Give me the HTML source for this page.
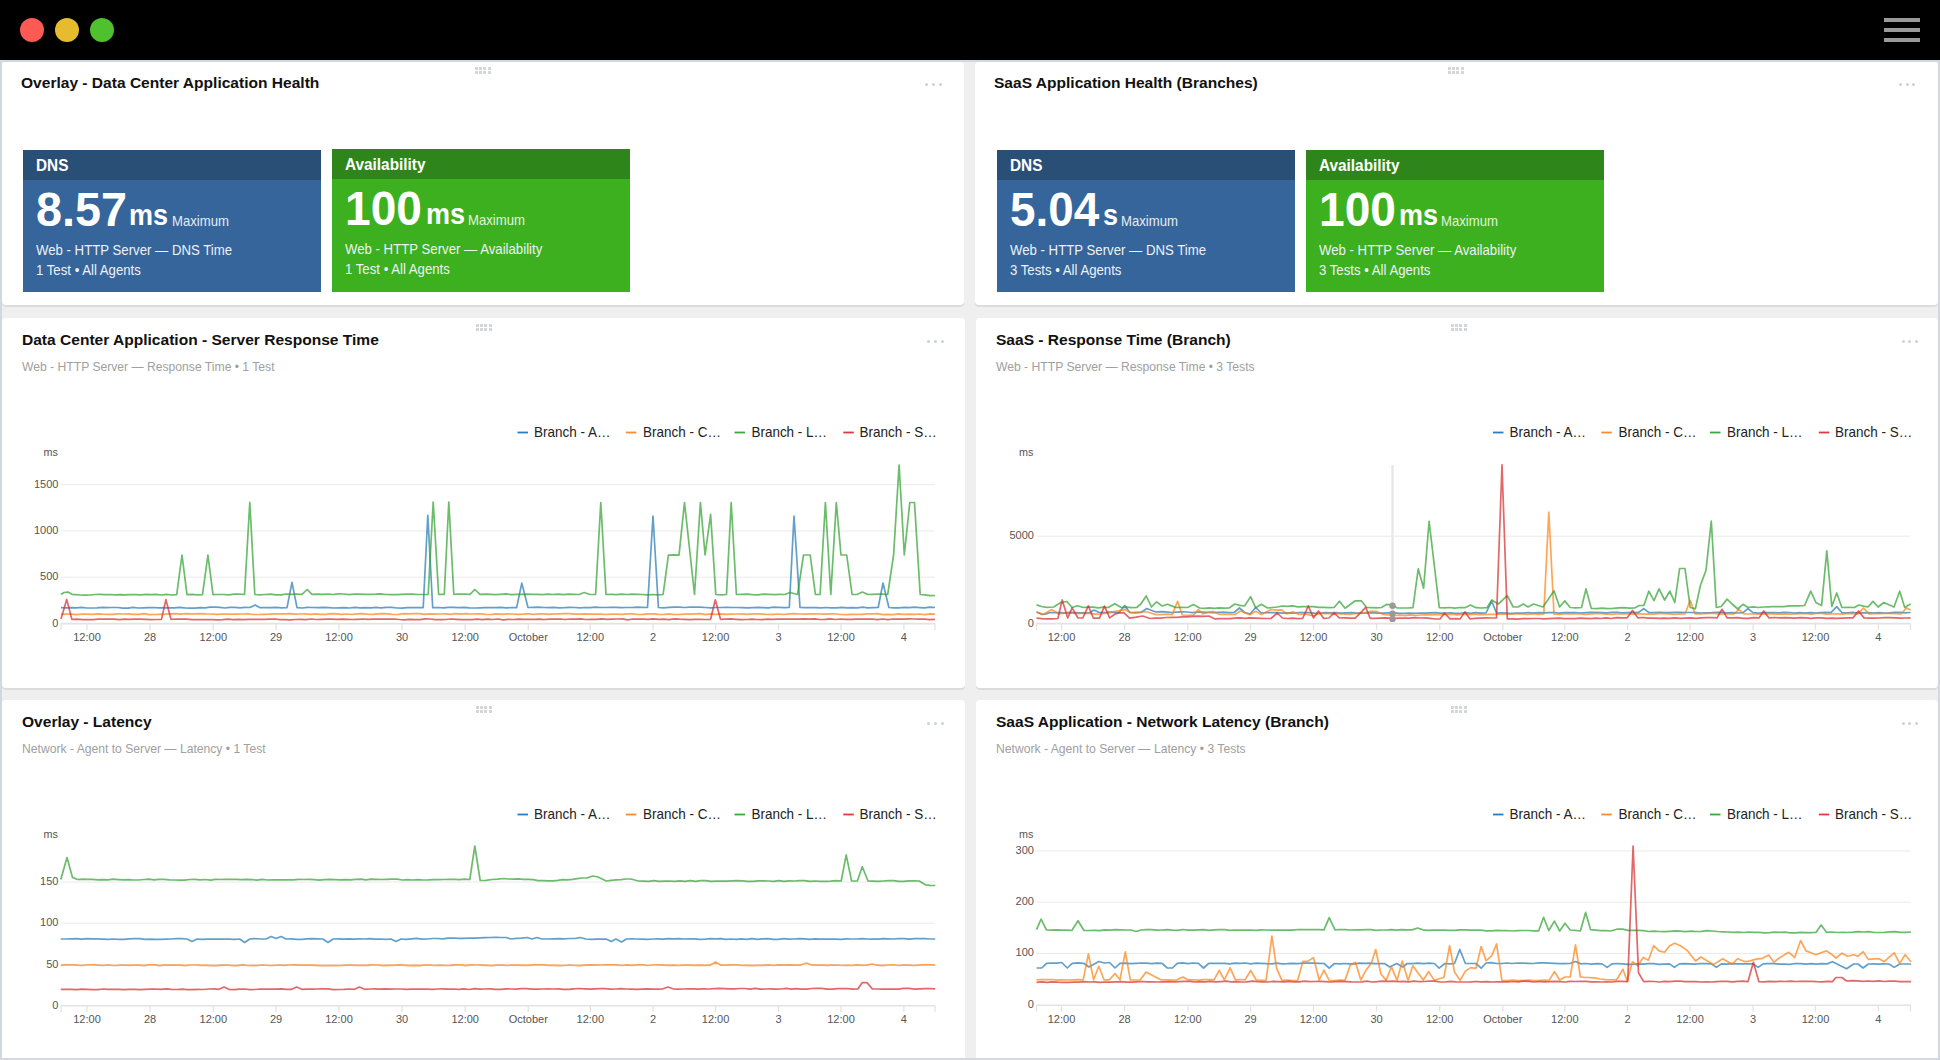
<!DOCTYPE html>
<html><head><meta charset="utf-8">
<style>
*{margin:0;padding:0;box-sizing:border-box}
html,body{width:1940px;height:1060px;overflow:hidden;background:#efefef;font-family:"Liberation Sans",sans-serif;position:relative}
.top{position:absolute;left:0;top:0;width:1940px;height:60px;background:#000}
.dot{position:absolute;top:18px;width:24px;height:24px;border-radius:50%}
.ham{position:absolute;left:1884px;width:36px;height:3.5px;background:#9a9a9a}
.edge{position:absolute;background:#d3d7df}
.card{position:absolute;background:#fff;border-radius:4px;box-shadow:0 2px 0 #dcdcdc}
.t{position:absolute;white-space:nowrap;line-height:1}
.title{font-weight:bold;font-size:15.55px;color:#111}
.sub{font-size:12.15px;color:#a0a0a0}
.tile{position:absolute;width:298px;height:142px;color:#fff}
.tile .hd{position:absolute;left:0;top:0;width:100%;height:30px}
.tile .hdt{position:absolute;left:13px;top:7.4px;font-weight:bold;font-size:16.5px;transform:scaleX(0.93);transform-origin:0 0}
.tile .big{position:absolute;top:0;font-weight:bold;font-size:48px}
.tile .unit{position:absolute;top:0;font-weight:bold;font-size:30px;transform:scaleX(0.9);transform-origin:0 0}
.tile .mx{position:absolute;top:0;font-size:14.3px;transform:scaleX(0.92);transform-origin:0 0;color:#e6ecf3}
.green .mx{color:#e2f3dc}
.tile .l1{position:absolute;left:13px;font-size:14.5px;transform:scaleX(0.91);transform-origin:0 0;color:#eef2f6}
.tile .l2{position:absolute;left:13px;font-size:14.5px;transform:scaleX(0.91);transform-origin:0 0;color:#eef2f6}
.blue{background:#35659b}.blue .hd{background:#2a4f77}
.green{background:#3cb01e}.green .hd{background:#2e861b}
.grip{position:absolute;width:17px;height:8px;background-image:radial-gradient(#cfd3d5 0 0);}
.gd{position:absolute;width:3px;height:3px;background:#d3d7d9}
.md{position:absolute;width:3px;height:3px;border-radius:50%;background:#cdd1d4}
.ov{position:absolute;left:0;top:0}
.ax{font-family:"Liberation Sans",sans-serif;font-size:11px;fill:#555}
.ms{font-family:"Liberation Sans",sans-serif;font-size:10.8px;fill:#555}
.lg{font-family:"Liberation Sans",sans-serif;font-size:15px;fill:#222}
</style></head><body>
<div class="top">
  <div class="dot" style="left:20px;background:#fc5a52"></div>
  <div class="dot" style="left:55px;background:#e6bb2e"></div>
  <div class="dot" style="left:90px;background:#50c12e"></div>
  <div class="ham" style="top:18px"></div>
  <div class="ham" style="top:28px"></div>
  <div class="ham" style="top:38px"></div>
</div>
<div class="edge" style="left:0;top:60px;width:1940px;height:2px"></div>
<div class="edge" style="left:0;top:60px;width:2px;height:1000px"></div>
<div class="edge" style="left:1938px;top:60px;width:2px;height:1000px"></div>
<div class="edge" style="left:0;top:1058px;width:1940px;height:2px"></div>

<div class="card" style="left:2px;top:62px;width:962px;height:243px"></div>
<div class="card" style="left:975px;top:62px;width:963px;height:243px"></div>
<div class="card" style="left:2px;top:318px;width:963px;height:370px"></div>
<div class="card" style="left:976px;top:318px;width:962px;height:370px"></div>
<div class="card" style="left:2px;top:700px;width:963px;height:358px;border-radius:4px 4px 0 0;box-shadow:none"></div>
<div class="card" style="left:976px;top:700px;width:962px;height:358px;border-radius:4px 4px 0 0;box-shadow:none"></div>


<div class="gd" style="left:475px;top:67px"></div>
<div class="gd" style="left:479px;top:67px"></div>
<div class="gd" style="left:483px;top:67px"></div>
<div class="gd" style="left:488px;top:67px"></div>
<div class="gd" style="left:475px;top:71px"></div>
<div class="gd" style="left:479px;top:71px"></div>
<div class="gd" style="left:483px;top:71px"></div>
<div class="gd" style="left:488px;top:71px"></div>
<div class="gd" style="left:1448px;top:67px"></div>
<div class="gd" style="left:1452px;top:67px"></div>
<div class="gd" style="left:1456px;top:67px"></div>
<div class="gd" style="left:1461px;top:67px"></div>
<div class="gd" style="left:1448px;top:71px"></div>
<div class="gd" style="left:1452px;top:71px"></div>
<div class="gd" style="left:1456px;top:71px"></div>
<div class="gd" style="left:1461px;top:71px"></div>
<div class="gd" style="left:476px;top:324px"></div>
<div class="gd" style="left:480px;top:324px"></div>
<div class="gd" style="left:484px;top:324px"></div>
<div class="gd" style="left:489px;top:324px"></div>
<div class="gd" style="left:476px;top:328px"></div>
<div class="gd" style="left:480px;top:328px"></div>
<div class="gd" style="left:484px;top:328px"></div>
<div class="gd" style="left:489px;top:328px"></div>
<div class="gd" style="left:1451px;top:324px"></div>
<div class="gd" style="left:1455px;top:324px"></div>
<div class="gd" style="left:1459px;top:324px"></div>
<div class="gd" style="left:1464px;top:324px"></div>
<div class="gd" style="left:1451px;top:328px"></div>
<div class="gd" style="left:1455px;top:328px"></div>
<div class="gd" style="left:1459px;top:328px"></div>
<div class="gd" style="left:1464px;top:328px"></div>
<div class="gd" style="left:476px;top:706px"></div>
<div class="gd" style="left:480px;top:706px"></div>
<div class="gd" style="left:484px;top:706px"></div>
<div class="gd" style="left:489px;top:706px"></div>
<div class="gd" style="left:476px;top:710px"></div>
<div class="gd" style="left:480px;top:710px"></div>
<div class="gd" style="left:484px;top:710px"></div>
<div class="gd" style="left:489px;top:710px"></div>
<div class="gd" style="left:1451px;top:706px"></div>
<div class="gd" style="left:1455px;top:706px"></div>
<div class="gd" style="left:1459px;top:706px"></div>
<div class="gd" style="left:1464px;top:706px"></div>
<div class="gd" style="left:1451px;top:710px"></div>
<div class="gd" style="left:1455px;top:710px"></div>
<div class="gd" style="left:1459px;top:710px"></div>
<div class="gd" style="left:1464px;top:710px"></div>
<div class="md" style="left:925.3px;top:83.3px"></div>
<div class="md" style="left:932.0px;top:83.3px"></div>
<div class="md" style="left:938.8px;top:83.3px"></div>
<div class="md" style="left:1898.9px;top:83.3px"></div>
<div class="md" style="left:1905.7px;top:83.3px"></div>
<div class="md" style="left:1912.4px;top:83.3px"></div>
<div class="md" style="left:927.1px;top:340.3px"></div>
<div class="md" style="left:933.9px;top:340.3px"></div>
<div class="md" style="left:940.6px;top:340.3px"></div>
<div class="md" style="left:1901.6px;top:340.3px"></div>
<div class="md" style="left:1908.3px;top:340.3px"></div>
<div class="md" style="left:1915.1px;top:340.3px"></div>
<div class="md" style="left:927.1px;top:722.3px"></div>
<div class="md" style="left:933.9px;top:722.3px"></div>
<div class="md" style="left:940.6px;top:722.3px"></div>
<div class="md" style="left:1901.6px;top:722.3px"></div>
<div class="md" style="left:1908.3px;top:722.3px"></div>
<div class="md" style="left:1915.1px;top:722.3px"></div>
<div class="t title" style="left:21px;top:75.2px">Overlay - Data Center Application Health</div>
<div class="t title" style="left:994px;top:75.2px">SaaS Application Health (Branches)</div>

<div class="tile blue" style="left:23px;top:150px">
  <div class="hd"></div><div class="t hdt">DNS</div>
  <div class="t big" style="left:13px;top:36px;transform:scaleX(0.975);transform-origin:0 0">8.57</div>
  <div class="t unit" style="left:106px;top:50px">ms</div>
  <div class="t mx" style="left:149px;top:64px">Maximum</div>
  <div class="t l1" style="top:92.5px">Web - HTTP Server — DNS Time</div>
  <div class="t l2" style="top:112.5px">1 Test • All Agents</div>
</div>
<div class="tile green" style="left:332px;top:149px;height:143px">
  <div class="hd"></div><div class="t hdt">Availability</div>
  <div class="t big" style="left:13px;top:36px;transform:scaleX(0.96);transform-origin:0 0">100</div>
  <div class="t unit" style="left:94px;top:50px">ms</div>
  <div class="t mx" style="left:136px;top:64px">Maximum</div>
  <div class="t l1" style="top:92.5px">Web - HTTP Server — Availability</div>
  <div class="t l2" style="top:112.5px">1 Test • All Agents</div>
</div>
<div class="tile blue" style="left:997px;top:150px">
  <div class="hd"></div><div class="t hdt">DNS</div>
  <div class="t big" style="left:13px;top:36px;transform:scaleX(0.955);transform-origin:0 0">5.04</div>
  <div class="t unit" style="left:105.5px;top:50px">s</div>
  <div class="t mx" style="left:124px;top:64px">Maximum</div>
  <div class="t l1" style="top:92.5px">Web - HTTP Server — DNS Time</div>
  <div class="t l2" style="top:112.5px">3 Tests • All Agents</div>
</div>
<div class="tile green" style="left:1306px;top:150px">
  <div class="hd"></div><div class="t hdt">Availability</div>
  <div class="t big" style="left:13px;top:36px;transform:scaleX(0.96);transform-origin:0 0">100</div>
  <div class="t unit" style="left:93px;top:50px">ms</div>
  <div class="t mx" style="left:135px;top:64px">Maximum</div>
  <div class="t l1" style="top:92.5px">Web - HTTP Server — Availability</div>
  <div class="t l2" style="top:112.5px">3 Tests • All Agents</div>
</div>

<div class="t title" style="left:22px;top:332.2px">Data Center Application - Server Response Time</div>
<div class="t sub" style="left:22px;top:361px">Web - HTTP Server — Response Time • 1 Test</div>
<div class="t title" style="left:996px;top:332.2px">SaaS - Response Time (Branch)</div>
<div class="t sub" style="left:996px;top:361px">Web - HTTP Server — Response Time • 3 Tests</div>

<div class="t title" style="left:22px;top:714.2px">Overlay - Latency</div>
<div class="t sub" style="left:22px;top:743px">Network - Agent to Server — Latency • 1 Test</div>
<div class="t title" style="left:996px;top:714.2px">SaaS Application - Network Latency (Branch)</div>
<div class="t sub" style="left:996px;top:743px">Network - Agent to Server — Latency • 3 Tests</div>

<svg class="ov" width="1940" height="1060" viewBox="0 0 1940 1060"><line x1="1392.5" x2="1392.5" y1="465" y2="621" stroke="#e8e8e8" stroke-width="2.4"/><line x1="61" x2="935" y1="484.7" y2="484.7" stroke="#e9e9e9" stroke-width="1"/>
<line x1="61" x2="935" y1="531" y2="531" stroke="#e9e9e9" stroke-width="1"/>
<line x1="61" x2="935" y1="577.2" y2="577.2" stroke="#e9e9e9" stroke-width="1"/>
<line x1="61" x2="935" y1="623.6" y2="623.6" stroke="#e3e3e3" stroke-width="1.6"/>
<line x1="61" x2="61" y1="623.6" y2="629.9" stroke="#e3e3e3" stroke-width="1.3"/>
<line x1="935" x2="935" y1="623.6" y2="629.9" stroke="#e3e3e3" stroke-width="1.3"/>
<line x1="87" x2="87" y1="623.6" y2="629.9" stroke="#e3e3e3" stroke-width="1.3"/>
<line x1="150.1" x2="150.1" y1="623.6" y2="629.9" stroke="#e3e3e3" stroke-width="1.3"/>
<line x1="213.3" x2="213.3" y1="623.6" y2="629.9" stroke="#e3e3e3" stroke-width="1.3"/>
<line x1="276.1" x2="276.1" y1="623.6" y2="629.9" stroke="#e3e3e3" stroke-width="1.3"/>
<line x1="339" x2="339" y1="623.6" y2="629.9" stroke="#e3e3e3" stroke-width="1.3"/>
<line x1="402" x2="402" y1="623.6" y2="629.9" stroke="#e3e3e3" stroke-width="1.3"/>
<line x1="465.2" x2="465.2" y1="623.6" y2="629.9" stroke="#e3e3e3" stroke-width="1.3"/>
<line x1="528.3" x2="528.3" y1="623.6" y2="629.9" stroke="#e3e3e3" stroke-width="1.3"/>
<line x1="590.3" x2="590.3" y1="623.6" y2="629.9" stroke="#e3e3e3" stroke-width="1.3"/>
<line x1="653" x2="653" y1="623.6" y2="629.9" stroke="#e3e3e3" stroke-width="1.3"/>
<line x1="715.6" x2="715.6" y1="623.6" y2="629.9" stroke="#e3e3e3" stroke-width="1.3"/>
<line x1="778.6" x2="778.6" y1="623.6" y2="629.9" stroke="#e3e3e3" stroke-width="1.3"/>
<line x1="841" x2="841" y1="623.6" y2="629.9" stroke="#e3e3e3" stroke-width="1.3"/>
<line x1="903.9" x2="903.9" y1="623.6" y2="629.9" stroke="#e3e3e3" stroke-width="1.3"/>
<text x="87" y="641.0" text-anchor="middle" class="ax">12:00</text>
<text x="150.1" y="641.0" text-anchor="middle" class="ax">28</text>
<text x="213.3" y="641.0" text-anchor="middle" class="ax">12:00</text>
<text x="276.1" y="641.0" text-anchor="middle" class="ax">29</text>
<text x="339" y="641.0" text-anchor="middle" class="ax">12:00</text>
<text x="402" y="641.0" text-anchor="middle" class="ax">30</text>
<text x="465.2" y="641.0" text-anchor="middle" class="ax">12:00</text>
<text x="528.3" y="641.0" text-anchor="middle" class="ax">October</text>
<text x="590.3" y="641.0" text-anchor="middle" class="ax">12:00</text>
<text x="653" y="641.0" text-anchor="middle" class="ax">2</text>
<text x="715.6" y="641.0" text-anchor="middle" class="ax">12:00</text>
<text x="778.6" y="641.0" text-anchor="middle" class="ax">3</text>
<text x="841" y="641.0" text-anchor="middle" class="ax">12:00</text>
<text x="903.9" y="641.0" text-anchor="middle" class="ax">4</text>
<text x="58.4" y="487.7" text-anchor="end" class="ax">1500</text>
<text x="58.4" y="534.0" text-anchor="end" class="ax">1000</text>
<text x="58.4" y="580.2" text-anchor="end" class="ax">500</text>
<text x="58.4" y="626.6" text-anchor="end" class="ax">0</text>
<text x="43.6" y="455.5" class="ms">ms</text>
<polyline fill="none" stroke="#1f77b4" stroke-opacity="0.7" stroke-width="1.7" stroke-linejoin="round" points="61.0,607.7 66.1,607.8 71.3,607.6 76.4,607.8 81.6,607.4 86.7,608.0 91.9,608.0 97.0,607.8 102.2,607.4 107.3,607.7 112.5,607.5 117.6,607.5 122.8,608.1 127.9,608.1 133.1,607.3 138.2,608.0 143.4,607.8 148.5,607.6 153.7,607.5 158.8,607.9 164.0,607.7 169.1,607.9 174.3,607.8 179.4,607.4 184.6,607.9 189.7,608.1 194.9,608.1 200.0,607.7 205.0,607.8 210.0,607.2 215.0,607.2 220.0,607.3 225.0,608.0 230.0,607.4 235.0,607.4 240.0,607.9 245.0,607.4 250.0,607.5 255.2,605.0 260.0,607.7 265.4,607.7 270.8,607.6 276.2,607.3 281.6,607.8 287.0,607.7 292.0,582.3 297.0,607.7 302.3,608.0 307.5,607.4 312.8,607.5 318.0,607.6 323.3,607.3 328.6,607.7 333.8,608.0 339.1,607.8 344.3,607.7 349.6,608.0 354.8,607.4 360.1,607.8 365.4,607.6 370.6,607.8 375.9,607.4 381.1,607.9 386.4,607.3 391.6,607.4 396.9,608.0 402.2,608.1 407.4,607.6 412.7,607.6 417.9,607.5 423.2,607.7 427.8,515.4 432.7,607.7 437.9,607.5 443.2,607.8 448.4,607.4 453.7,607.4 458.9,607.7 464.2,607.4 469.4,607.8 474.6,608.0 479.9,607.9 485.1,607.7 490.4,607.6 495.6,607.6 500.9,607.3 506.1,607.9 511.4,607.5 516.6,607.7 521.8,583.1 528.0,607.5 533.2,607.3 538.4,607.1 543.6,607.5 548.8,607.6 554.0,607.4 559.2,607.8 564.4,607.7 569.6,607.3 574.8,607.5 580.0,607.9 585.2,607.5 590.3,607.6 595.5,607.1 600.7,607.5 605.9,607.5 611.1,607.4 616.3,607.4 621.5,607.6 626.7,607.5 631.9,607.5 637.1,607.2 642.3,607.4 647.5,607.5 653.0,516.0 658.4,607.5 663.6,607.9 668.9,607.4 674.1,607.1 679.3,607.1 684.6,607.5 689.8,607.1 695.1,607.1 700.3,607.1 705.5,607.5 710.8,607.9 716.0,607.5 721.2,607.5 726.5,607.4 731.7,607.5 736.9,607.5 742.2,607.7 747.4,607.9 752.6,607.7 757.9,607.4 763.1,607.6 768.4,607.9 773.6,607.2 778.8,607.3 784.1,607.6 789.3,607.5 794.0,516.0 800.0,607.5 805.2,607.7 810.4,607.6 815.6,607.6 820.9,607.8 826.1,607.5 831.3,607.8 836.5,607.9 841.7,607.4 846.9,607.8 852.1,607.7 857.3,607.8 862.6,607.1 867.8,607.9 873.0,607.7 878.2,607.5 883.0,583.0 888.9,607.5 894.0,607.9 899.1,607.9 904.3,607.3 909.4,607.7 914.5,607.2 919.6,607.6 924.8,607.9 929.9,607.2 935.0,607.5"/>
<polyline fill="none" stroke="#ff7f0e" stroke-opacity="0.7" stroke-width="1.7" stroke-linejoin="round" points="61.0,614.2 66.2,614.2 71.4,614.2 76.6,614.6 81.8,614.2 87.0,614.2 92.2,614.3 97.4,613.9 102.6,614.2 107.8,614.3 113.0,614.4 118.2,613.8 123.3,614.0 128.5,613.8 133.7,614.4 138.9,614.3 144.1,613.7 149.3,614.6 154.5,614.5 159.7,614.3 164.9,614.2 170.1,613.8 175.3,613.7 180.5,614.1 185.7,613.7 190.9,613.8 196.1,613.9 201.3,613.7 206.5,614.0 211.7,614.0 216.9,614.4 222.1,614.1 227.3,614.2 232.5,614.1 237.7,614.2 242.8,614.0 248.0,613.8 253.2,614.5 258.4,614.5 263.6,614.3 268.8,614.2 274.0,613.9 279.2,613.8 284.4,613.8 289.6,613.6 294.8,614.2 300.0,614.0 305.2,613.9 310.4,614.3 315.6,613.9 320.7,614.4 325.9,614.3 331.1,613.6 336.3,613.8 341.5,614.4 346.7,614.0 351.9,614.5 357.0,613.9 362.2,613.6 367.4,614.1 372.6,614.3 377.8,613.8 383.0,613.7 388.1,613.9 393.3,614.5 398.5,614.3 403.7,613.7 408.9,613.8 414.1,613.7 419.3,613.6 424.4,614.3 429.6,613.8 434.8,614.1 440.0,614.0 445.2,613.8 450.4,614.3 455.6,613.7 460.7,614.2 465.9,613.7 471.1,614.0 476.3,613.8 481.5,613.9 486.7,614.5 491.9,614.3 497.0,613.9 502.2,614.4 507.4,613.8 512.6,614.0 517.8,614.4 523.0,614.2 528.1,613.7 533.3,614.5 538.5,613.8 543.7,613.9 548.9,614.3 554.1,613.9 559.3,613.9 564.4,613.7 569.6,613.7 574.8,614.2 580.0,614.1 585.2,613.9 590.4,614.2 595.7,614.0 600.9,614.1 606.1,614.5 611.3,614.1 616.5,614.2 621.8,614.4 627.0,613.8 632.2,613.8 637.4,614.5 642.6,614.4 647.9,613.9 653.1,613.8 658.3,614.3 663.5,614.5 668.8,613.9 674.0,614.5 679.2,614.5 684.4,614.2 689.6,614.1 694.9,613.8 700.1,613.7 705.3,614.6 710.5,613.9 715.7,614.3 721.0,613.9 726.2,614.4 731.4,614.2 736.6,614.0 741.8,613.9 747.1,614.3 752.3,613.8 757.5,613.9 762.7,614.2 767.9,614.5 773.2,614.3 778.4,614.0 783.6,614.5 788.8,613.9 794.0,613.7 799.3,614.0 804.5,614.1 809.7,613.8 814.9,613.9 820.1,614.0 825.4,614.2 830.6,613.8 835.8,614.0 841.0,614.5 846.2,614.6 851.5,614.3 856.7,614.4 861.9,614.3 867.1,613.9 872.4,613.8 877.6,613.7 882.8,614.6 888.0,614.4 893.2,614.6 898.5,613.8 903.7,614.3 908.9,614.2 914.1,614.4 919.3,614.0 924.6,614.6 929.8,613.8 935.0,614.2"/>
<polyline fill="none" stroke="#2ca02c" stroke-opacity="0.7" stroke-width="1.7" stroke-linejoin="round" points="61.0,594.5 64.0,592.5 68.0,592.0 72.0,594.3 76.0,594.6 80.0,595.0 85.0,595.1 90.0,595.0 95.0,594.5 100.0,594.4 105.0,594.6 110.0,594.5 115.0,594.9 120.0,594.6 125.2,594.8 130.3,594.7 135.5,594.7 140.6,594.8 145.8,594.3 150.9,594.6 156.1,594.4 161.2,595.0 166.4,594.3 171.5,595.0 176.7,594.7 182.0,555.2 187.0,594.7 192.2,594.3 197.3,594.9 202.5,594.7 207.9,555.0 213.0,594.7 218.2,594.5 223.5,594.5 228.8,594.9 234.0,594.1 239.2,594.1 244.5,594.5 249.8,502.3 254.8,594.5 260.0,594.9 265.3,594.5 270.5,594.1 275.8,594.8 281.0,594.8 286.3,594.0 291.5,594.3 296.8,594.0 302.0,594.3 307.2,589.5 312.0,594.3 317.3,594.1 322.6,594.4 327.8,594.0 333.1,594.5 338.4,593.9 343.7,594.0 349.0,594.6 354.3,594.2 359.5,594.2 364.8,594.4 370.1,594.3 375.4,594.2 380.7,593.9 385.9,594.5 391.2,594.7 396.5,594.7 401.8,594.4 407.1,594.2 412.4,594.2 417.6,594.5 422.9,594.5 428.2,594.3 433.2,502.0 438.6,594.3 444.3,594.3 448.8,502.0 453.8,594.3 459.2,594.0 464.6,594.1 470.0,594.3 474.8,589.5 480.0,594.3 485.2,594.2 490.4,594.3 495.6,594.6 500.8,594.3 506.1,593.9 511.3,594.7 516.5,594.3 521.7,594.4 526.9,594.1 532.1,594.3 537.3,594.3 542.5,594.7 547.7,594.1 552.9,594.5 558.2,594.2 563.4,594.6 568.6,594.1 573.8,594.3 579.0,594.5 584.2,592.5 590.0,594.5 595.6,594.5 600.8,502.5 606.0,594.5 611.2,594.4 616.4,594.6 621.6,594.1 626.8,594.5 632.0,594.2 637.1,594.3 642.3,594.5 647.5,594.9 652.7,594.5 657.9,594.9 663.1,594.5 668.4,555.1 673.7,554.8 679.0,555.1 684.5,502.5 689.5,548.5 694.5,594.5 700.4,502.5 705.1,555.0 710.6,514.4 715.8,594.5 721.1,594.9 726.5,594.5 731.2,502.5 736.4,594.5 741.8,594.4 747.2,594.2 752.6,594.7 758.0,594.9 763.4,594.1 768.8,594.3 774.2,594.7 779.6,594.4 785.0,594.5 790.0,592.5 797.6,594.5 803.5,555.0 810.2,555.0 815.4,594.5 820.1,594.5 825.4,502.5 830.8,594.5 836.3,502.5 841.0,555.0 846.7,555.0 852.1,594.5 857.0,594.5 862.3,592.0 868.0,594.5 872.9,594.3 877.9,594.1 882.8,594.1 887.7,594.5 893.6,555.0 899.1,465.0 904.3,555.0 909.8,502.5 914.5,502.5 920.2,594.5 925.1,594.9 930.1,595.6 935.0,595.5"/>
<polyline fill="none" stroke="#d62728" stroke-opacity="0.7" stroke-width="1.7" stroke-linejoin="round" points="61.0,619.1 66.7,599.4 71.9,619.4 77.2,619.2 82.4,619.6 87.7,619.6 93.0,619.7 98.3,619.1 103.5,619.2 108.8,619.1 114.1,619.2 119.3,619.6 124.6,619.1 129.9,619.4 135.1,619.1 140.4,619.2 145.7,619.3 151.0,619.7 156.2,619.5 161.5,619.4 165.9,599.6 171.0,619.4 176.2,619.0 181.4,619.2 186.6,619.1 191.8,619.7 196.9,619.7 202.1,619.7 207.3,619.7 212.5,619.6 217.7,619.8 222.9,619.7 228.1,619.2 233.3,619.7 238.4,619.4 243.6,619.6 248.8,619.4 254.0,619.3 259.2,619.3 264.4,619.3 269.6,619.2 274.8,619.0 280.0,619.7 285.1,619.6 290.3,619.8 295.5,619.5 300.7,619.4 305.9,619.6 311.1,619.0 316.3,619.5 321.5,619.3 326.7,619.1 331.8,619.1 337.0,619.4 342.2,619.1 347.4,619.3 352.6,619.5 357.8,619.3 363.0,619.0 368.2,619.4 373.4,619.1 378.5,619.1 383.7,619.1 388.9,619.2 394.1,619.0 399.3,619.5 404.5,619.8 409.7,619.3 414.9,619.6 420.0,619.7 425.2,618.9 430.4,619.0 435.6,619.6 440.8,619.7 446.0,619.5 451.2,619.0 456.4,619.3 461.6,619.7 466.7,619.7 471.9,619.6 477.1,619.1 482.3,619.7 487.5,619.2 492.7,619.5 497.9,619.0 503.1,619.8 508.2,619.4 513.4,619.5 518.6,619.1 523.8,619.4 529.0,619.4 534.2,619.4 539.4,619.2 544.6,619.5 549.8,619.2 554.9,619.1 560.1,619.0 565.3,619.5 570.5,619.0 575.7,619.1 580.9,618.9 586.1,619.5 591.3,619.4 596.5,619.4 601.6,618.9 606.8,619.3 612.0,619.2 617.2,619.0 622.4,618.9 627.6,619.8 632.8,619.0 638.0,619.1 643.2,619.1 648.3,619.4 653.5,618.9 658.7,619.3 663.9,619.2 669.1,619.6 674.3,618.9 679.5,619.2 684.7,619.3 689.8,619.7 695.0,619.3 700.2,619.3 705.4,619.5 710.6,619.3 715.3,599.8 720.5,619.3 725.7,619.1 731.0,618.9 736.2,619.3 741.4,619.7 746.7,619.5 751.9,619.1 757.1,619.5 762.4,619.6 767.6,619.1 772.8,619.4 778.0,619.2 783.3,619.1 788.5,619.1 793.7,619.0 799.0,619.2 804.2,618.9 809.4,619.2 814.7,618.9 819.9,619.5 825.1,619.4 830.4,618.9 835.6,619.5 840.8,619.0 846.1,619.3 851.3,619.3 856.5,619.1 861.8,619.1 867.0,619.2 872.2,619.0 877.5,619.6 882.7,619.0 887.9,619.6 893.1,619.0 898.4,619.1 903.6,619.2 908.8,618.9 914.1,619.0 919.3,619.2 924.5,619.2 929.8,619.6 935.0,619.3"/>

<line x1="517.5" x2="528" y1="432.5" y2="432.5" stroke="#2a7bc4" stroke-width="1.8"/>
<text transform="translate(534,437.4) scale(0.9,1)" class="lg">Branch - A…</text>
<line x1="625.8" x2="636.3" y1="432.5" y2="432.5" stroke="#fd8a2e" stroke-width="1.8"/>
<text transform="translate(643,437.4) scale(0.9,1)" class="lg">Branch - C…</text>
<line x1="734.5" x2="745" y1="432.5" y2="432.5" stroke="#3aa83a" stroke-width="1.8"/>
<text transform="translate(751.4,437.4) scale(0.9,1)" class="lg">Branch - L…</text>
<line x1="843.3" x2="853.8" y1="432.5" y2="432.5" stroke="#dc3a3f" stroke-width="1.8"/>
<text transform="translate(859.5,437.4) scale(0.9,1)" class="lg">Branch - S…</text>
<line x1="1036.5" x2="1910.5" y1="536.2" y2="536.2" stroke="#e9e9e9" stroke-width="1"/>
<line x1="1036.5" x2="1910.5" y1="623.6" y2="623.6" stroke="#e3e3e3" stroke-width="1.6"/>
<line x1="1036.5" x2="1036.5" y1="623.6" y2="629.9" stroke="#e3e3e3" stroke-width="1.3"/>
<line x1="1910.5" x2="1910.5" y1="623.6" y2="629.9" stroke="#e3e3e3" stroke-width="1.3"/>
<line x1="1061.5" x2="1061.5" y1="623.6" y2="629.9" stroke="#e3e3e3" stroke-width="1.3"/>
<line x1="1124.6" x2="1124.6" y1="623.6" y2="629.9" stroke="#e3e3e3" stroke-width="1.3"/>
<line x1="1187.8" x2="1187.8" y1="623.6" y2="629.9" stroke="#e3e3e3" stroke-width="1.3"/>
<line x1="1250.6" x2="1250.6" y1="623.6" y2="629.9" stroke="#e3e3e3" stroke-width="1.3"/>
<line x1="1313.5" x2="1313.5" y1="623.6" y2="629.9" stroke="#e3e3e3" stroke-width="1.3"/>
<line x1="1376.5" x2="1376.5" y1="623.6" y2="629.9" stroke="#e3e3e3" stroke-width="1.3"/>
<line x1="1439.7" x2="1439.7" y1="623.6" y2="629.9" stroke="#e3e3e3" stroke-width="1.3"/>
<line x1="1502.8" x2="1502.8" y1="623.6" y2="629.9" stroke="#e3e3e3" stroke-width="1.3"/>
<line x1="1564.8" x2="1564.8" y1="623.6" y2="629.9" stroke="#e3e3e3" stroke-width="1.3"/>
<line x1="1627.5" x2="1627.5" y1="623.6" y2="629.9" stroke="#e3e3e3" stroke-width="1.3"/>
<line x1="1690.1" x2="1690.1" y1="623.6" y2="629.9" stroke="#e3e3e3" stroke-width="1.3"/>
<line x1="1753.1" x2="1753.1" y1="623.6" y2="629.9" stroke="#e3e3e3" stroke-width="1.3"/>
<line x1="1815.5" x2="1815.5" y1="623.6" y2="629.9" stroke="#e3e3e3" stroke-width="1.3"/>
<line x1="1878.4" x2="1878.4" y1="623.6" y2="629.9" stroke="#e3e3e3" stroke-width="1.3"/>
<text x="1061.5" y="641.0" text-anchor="middle" class="ax">12:00</text>
<text x="1124.6" y="641.0" text-anchor="middle" class="ax">28</text>
<text x="1187.8" y="641.0" text-anchor="middle" class="ax">12:00</text>
<text x="1250.6" y="641.0" text-anchor="middle" class="ax">29</text>
<text x="1313.5" y="641.0" text-anchor="middle" class="ax">12:00</text>
<text x="1376.5" y="641.0" text-anchor="middle" class="ax">30</text>
<text x="1439.7" y="641.0" text-anchor="middle" class="ax">12:00</text>
<text x="1502.8" y="641.0" text-anchor="middle" class="ax">October</text>
<text x="1564.8" y="641.0" text-anchor="middle" class="ax">12:00</text>
<text x="1627.5" y="641.0" text-anchor="middle" class="ax">2</text>
<text x="1690.1" y="641.0" text-anchor="middle" class="ax">12:00</text>
<text x="1753.1" y="641.0" text-anchor="middle" class="ax">3</text>
<text x="1815.5" y="641.0" text-anchor="middle" class="ax">12:00</text>
<text x="1878.4" y="641.0" text-anchor="middle" class="ax">4</text>
<text x="1033.9" y="539.2" text-anchor="end" class="ax">5000</text>
<text x="1033.9" y="626.6" text-anchor="end" class="ax">0</text>
<text x="1019.1" y="455.5" class="ms">ms</text>
<polyline fill="none" stroke="#1f77b4" stroke-opacity="0.7" stroke-width="1.7" stroke-linejoin="round" points="1036.5,612.0 1041.9,614.5 1046.0,613.9 1050.0,612.5 1055.0,612.7 1060.0,612.7 1065.0,612.9 1070.0,612.3 1075.0,612.6 1080.0,612.9 1085.0,612.8 1090.0,612.5 1094.0,610.0 1099.0,612.5 1104.0,612.6 1109.0,612.2 1114.0,612.4 1119.0,612.5 1124.8,605.5 1129.6,612.5 1135.3,612.9 1141.0,612.5 1146.8,608.5 1151.2,610.2 1155.7,612.0 1160.9,611.7 1166.1,611.9 1171.4,612.5 1176.6,612.1 1181.8,611.9 1187.0,612.0 1192.2,612.6 1197.5,612.1 1202.7,612.2 1207.9,612.4 1213.1,612.6 1218.3,612.4 1223.6,612.1 1228.8,612.5 1234.0,612.5 1239.5,608.0 1244.6,612.5 1250.0,614.0 1255.7,607.5 1261.4,613.0 1266.7,612.6 1272.0,612.6 1277.3,612.7 1282.5,613.2 1287.8,612.8 1293.1,613.2 1298.4,612.7 1303.7,612.7 1309.0,612.6 1314.3,613.2 1319.6,613.3 1324.8,612.7 1330.1,612.8 1335.4,612.6 1340.7,613.1 1346.0,612.8 1351.3,612.7 1356.6,613.1 1361.8,613.1 1367.1,613.0 1372.4,612.7 1377.7,613.1 1383.0,613.1 1388.3,612.9 1393.6,612.7 1398.9,613.4 1404.1,613.3 1409.4,613.2 1414.7,613.4 1420.0,613.0 1425.1,613.1 1430.2,612.9 1435.2,612.7 1440.3,613.1 1445.4,613.0 1450.5,612.9 1455.5,613.4 1460.6,613.3 1465.7,612.7 1470.8,613.3 1475.8,612.6 1480.9,613.1 1486.0,613.0 1491.8,601.2 1496.5,613.0 1501.7,612.8 1507.0,613.2 1512.2,613.4 1517.5,613.0 1522.7,613.2 1527.9,612.5 1533.2,613.1 1538.4,612.6 1543.7,612.9 1548.9,612.7 1554.1,612.5 1559.4,613.1 1564.6,612.5 1569.9,612.6 1575.1,612.5 1580.4,613.0 1585.6,612.6 1590.8,612.4 1596.1,612.4 1601.3,612.5 1606.6,612.8 1611.8,612.3 1617.0,612.3 1622.3,612.9 1627.5,612.7 1632.8,612.4 1638.0,612.7 1643.8,608.6 1649.0,612.7 1654.2,612.5 1659.4,612.4 1664.7,612.5 1669.9,612.6 1675.1,612.4 1680.3,612.4 1685.6,612.5 1690.8,612.5 1696.0,612.7 1701.2,613.0 1706.4,612.8 1711.7,612.7 1716.9,612.3 1722.1,612.4 1727.3,612.8 1732.6,612.6 1737.8,613.0 1743.0,612.7 1748.0,608.6 1753.0,612.7 1758.2,613.1 1763.4,612.5 1768.6,612.6 1773.8,612.5 1779.0,612.9 1784.2,612.3 1789.4,612.5 1794.6,613.0 1799.8,612.6 1805.0,613.1 1810.2,612.6 1815.4,613.0 1820.6,612.7 1825.8,612.3 1831.0,612.7 1836.7,606.6 1842.0,612.7 1847.3,612.8 1852.6,612.4 1857.8,613.0 1863.1,612.8 1868.4,612.6 1873.7,613.0 1878.9,612.6 1884.2,613.0 1889.5,612.8 1894.8,612.3 1900.0,612.3 1905.3,612.8 1910.6,612.5"/>
<polyline fill="none" stroke="#ff7f0e" stroke-opacity="0.7" stroke-width="1.7" stroke-linejoin="round" points="1036.5,612.0 1043.0,614.4 1047.5,612.0 1052.0,609.6 1058.5,614.0 1064.2,613.2 1070.0,613.0 1075.0,613.3 1080.0,613.5 1085.0,613.5 1090.0,613.4 1095.0,614.1 1100.0,614.0 1104.7,613.4 1109.5,612.3 1114.2,611.5 1119.5,610.6 1124.8,609.6 1130.8,612.6 1136.3,612.2 1141.9,611.8 1147.4,612.0 1151.6,613.2 1155.7,614.6 1161.2,614.7 1166.8,614.2 1172.3,614.6 1177.6,601.3 1182.3,615.0 1187.9,615.3 1193.6,615.0 1198.3,609.6 1203.1,614.0 1207.8,612.5 1212.6,611.5 1219.7,614.5 1224.8,614.3 1230.0,614.1 1235.1,614.5 1240.4,611.0 1245.2,612.9 1250.0,614.8 1255.7,611.3 1261.4,614.4 1266.2,612.0 1271.0,609.5 1276.3,610.1 1281.6,609.8 1286.8,613.9 1292.9,611.7 1299.0,614.5 1306.0,614.0 1310.0,615.1 1314.0,615.7 1320.1,613.0 1325.1,613.6 1330.1,613.6 1335.0,613.3 1340.0,613.8 1345.0,614.2 1350.0,614.5 1354.3,613.7 1358.7,613.5 1364.8,612.8 1371.0,611.3 1376.2,611.3 1383.2,614.5 1388.9,614.9 1394.6,615.5 1399.7,615.1 1404.8,615.6 1409.8,614.9 1414.9,615.5 1420.0,615.0 1425.3,614.9 1430.7,614.9 1436.0,614.7 1441.3,614.7 1446.7,614.4 1452.0,614.2 1457.3,614.9 1462.7,614.2 1468.0,614.7 1473.3,614.1 1478.7,614.7 1484.0,614.6 1489.3,614.4 1494.7,614.3 1500.0,614.0 1505.5,614.1 1511.0,614.2 1516.4,613.7 1521.9,614.0 1527.4,614.3 1532.8,613.7 1538.3,614.4 1543.8,614.0 1548.8,512.2 1554.0,614.0 1559.2,614.3 1564.5,613.9 1569.7,613.9 1575.0,614.0 1580.2,613.9 1585.4,614.4 1590.7,613.9 1595.9,613.6 1601.2,613.6 1606.4,614.2 1611.6,614.4 1616.9,614.0 1622.1,614.0 1627.4,614.0 1632.6,614.2 1637.8,613.7 1643.1,614.1 1648.3,614.1 1653.6,614.1 1658.8,613.7 1664.0,613.7 1669.3,613.9 1674.5,614.4 1679.8,613.9 1685.0,614.0 1690.2,600.2 1695.0,613.8 1699.9,613.9 1704.8,613.6 1709.6,613.4 1714.5,613.4 1719.4,614.1 1724.2,614.0 1729.1,613.7 1734.0,613.8 1738.9,609.3 1744.0,613.8 1749.2,614.0 1754.4,614.0 1759.5,614.2 1764.7,614.2 1769.9,613.7 1775.1,614.2 1780.3,614.2 1785.5,613.9 1790.6,614.1 1795.8,613.8 1801.0,613.7 1806.2,613.6 1811.4,614.1 1816.5,613.5 1821.7,613.4 1826.9,614.1 1832.1,614.0 1837.3,613.8 1842.5,614.1 1847.6,613.4 1852.8,613.6 1858.0,613.8 1863.5,608.0 1869.0,613.8 1874.3,613.6 1879.7,613.7 1885.0,613.5 1890.3,613.4 1895.7,613.7 1901.0,613.8 1906.5,608.0 1910.6,610.0"/>
<polyline fill="none" stroke="#2ca02c" stroke-opacity="0.7" stroke-width="1.7" stroke-linejoin="round" points="1036.5,604.9 1041.5,606.5 1046.6,607.3 1053.7,607.0 1060.8,602.5 1066.8,601.5 1072.1,607.5 1077.4,605.7 1083.3,607.5 1088.3,607.2 1093.3,607.1 1098.2,607.9 1103.2,607.2 1108.2,607.5 1114.8,603.7 1121.3,607.5 1126.4,607.2 1131.6,607.6 1136.7,607.5 1140.8,604.0 1146.2,596.0 1151.5,607.0 1156.6,601.9 1162.2,606.0 1167.5,604.3 1171.7,605.9 1175.8,607.5 1181.8,607.4 1187.7,607.5 1193.4,604.6 1199.5,608.0 1204.5,608.4 1209.4,607.8 1214.3,608.4 1219.3,607.8 1224.2,608.1 1229.2,608.0 1234.8,604.0 1239.7,605.4 1244.6,606.0 1250.6,596.6 1255.7,607.8 1261.4,604.3 1267.5,608.0 1272.5,607.5 1277.4,607.0 1282.4,606.0 1287.6,606.3 1292.7,605.9 1297.9,606.8 1303.1,606.7 1308.2,606.6 1313.4,606.6 1318.6,607.4 1323.8,607.3 1328.9,607.7 1334.1,607.5 1339.4,601.2 1345.1,608.2 1350.2,604.5 1355.2,600.8 1361.3,600.8 1366.6,607.5 1371.6,607.7 1376.5,607.9 1381.5,607.5 1386.7,604.3 1392.0,605.0 1397.2,608.0 1402.5,608.0 1407.7,608.0 1413.0,607.7 1418.2,568.8 1423.6,588.2 1429.1,521.4 1434.2,564.5 1439.3,607.7 1444.4,607.8 1449.6,607.5 1454.7,608.1 1459.9,607.5 1465.0,607.7 1470.5,605.0 1476.0,607.7 1481.5,608.0 1487.0,607.7 1491.8,600.0 1498.3,604.0 1502.8,599.9 1507.3,595.7 1513.2,607.0 1518.0,607.0 1523.4,604.0 1528.0,607.0 1533.6,604.0 1538.2,605.5 1542.9,607.0 1548.5,598.9 1554.0,590.7 1559.6,607.0 1564.8,600.9 1570.2,607.5 1575.8,607.9 1581.5,607.5 1586.0,588.9 1591.3,608.5 1596.7,608.6 1602.2,608.1 1607.6,608.6 1613.0,608.4 1618.4,607.9 1623.8,607.7 1629.3,608.1 1634.7,608.0 1639.3,605.5 1643.8,605.5 1648.8,591.2 1654.0,600.7 1659.0,588.9 1664.6,600.0 1669.8,591.2 1674.8,602.5 1679.6,568.5 1685.0,568.5 1690.2,607.5 1695.4,608.8 1700.4,585.5 1706.0,570.3 1711.3,521.0 1716.3,607.5 1721.2,606.5 1727.1,599.1 1732.1,604.0 1737.8,609.0 1743.0,604.3 1748.0,607.5 1753.1,606.9 1758.3,607.5 1763.4,607.0 1768.6,606.8 1773.7,606.5 1778.9,606.6 1784.0,606.6 1789.2,605.9 1794.3,605.8 1799.5,605.8 1804.6,605.5 1810.7,591.2 1815.9,602.5 1821.6,605.5 1826.8,550.9 1831.8,606.5 1836.7,593.0 1841.9,607.5 1848.2,607.3 1854.4,607.5 1858.9,605.0 1863.5,606.1 1868.0,607.0 1873.0,601.4 1878.2,607.0 1883.8,602.5 1888.9,604.8 1894.0,607.0 1899.7,591.2 1904.7,607.5 1910.6,604.0"/>
<polyline fill="none" stroke="#d62728" stroke-opacity="0.7" stroke-width="1.7" stroke-linejoin="round" points="1036.5,618.2 1041.8,618.7 1047.2,618.8 1052.6,618.8 1057.9,618.5 1062.2,599.9 1067.7,617.9 1072.1,607.9 1078.0,618.0 1082.8,618.0 1088.3,605.8 1093.4,618.2 1099.4,618.2 1104.5,606.1 1109.7,617.9 1115.4,613.8 1119.6,612.8 1123.7,612.6 1129.6,618.2 1136.1,617.2 1142.6,616.0 1150.0,618.5 1155.4,618.2 1160.7,618.1 1166.1,617.5 1171.5,617.3 1176.8,617.3 1182.2,616.9 1187.5,616.9 1192.9,616.3 1198.3,616.1 1203.6,616.4 1209.0,616.0 1215.0,618.9 1220.0,618.7 1225.0,618.6 1230.0,618.7 1235.0,618.2 1240.0,617.8 1245.0,618.3 1250.0,617.9 1255.2,618.1 1260.5,618.3 1265.8,618.5 1271.0,618.5 1277.2,613.0 1282.4,618.0 1287.5,618.5 1292.5,618.1 1297.5,618.6 1302.6,618.5 1308.3,606.0 1313.5,617.9 1318.4,610.9 1323.6,618.3 1328.9,618.0 1334.1,612.9 1339.4,618.0 1344.7,617.9 1349.9,618.2 1355.2,618.2 1360.5,612.8 1365.7,607.3 1370.1,618.3 1375.1,618.4 1380.1,618.1 1385.1,617.8 1390.1,618.2 1395.0,618.3 1400.0,618.2 1405.0,618.0 1410.0,618.2 1415.0,617.7 1420.0,618.0 1425.0,617.9 1430.0,618.3 1435.0,619.0 1440.0,618.9 1444.5,613.0 1450.0,618.9 1455.0,618.6 1460.0,618.9 1465.0,612.0 1470.0,618.9 1475.3,618.4 1480.6,618.2 1485.9,617.9 1491.2,618.0 1496.5,618.0 1502.0,464.8 1507.3,618.9 1512.5,618.9 1517.7,619.1 1522.9,618.6 1528.1,618.6 1533.3,618.5 1538.5,618.5 1543.7,618.8 1548.9,618.6 1554.1,618.3 1559.3,618.1 1564.5,618.7 1569.8,618.6 1575.0,618.6 1580.2,618.1 1585.4,618.3 1590.6,618.6 1595.8,618.2 1601.0,618.5 1606.2,617.8 1611.4,618.5 1616.6,617.6 1621.8,617.9 1627.0,617.9 1632.5,610.4 1638.0,617.9 1643.3,617.5 1648.5,618.2 1653.8,618.1 1659.1,618.3 1664.3,618.2 1669.6,618.3 1674.9,617.9 1680.1,618.3 1685.4,618.1 1690.7,617.8 1695.9,618.3 1701.2,617.8 1706.5,617.6 1711.7,617.5 1717.0,617.9 1722.0,609.3 1727.0,617.9 1732.3,617.9 1737.7,617.6 1743.0,618.3 1748.3,618.3 1753.7,617.6 1759.0,617.9 1763.8,611.0 1769.0,617.9 1774.2,617.5 1779.5,617.9 1784.8,617.6 1790.0,617.9 1795.2,618.2 1800.5,617.7 1805.8,617.8 1811.0,618.3 1816.2,617.9 1821.5,617.8 1826.8,618.3 1832.0,618.2 1837.2,618.3 1842.5,618.1 1847.8,617.8 1853.0,617.9 1858.5,611.0 1864.0,617.9 1869.2,618.1 1874.4,618.2 1879.5,618.0 1884.7,617.7 1889.9,617.7 1895.1,617.8 1900.2,618.1 1905.4,618.0 1910.6,617.9"/>
<circle cx="1392.5" cy="605.8" r="3.2" fill="#999"/><circle cx="1392.5" cy="613.6" r="3.2" fill="#999"/><circle cx="1392.5" cy="618.9" r="3.2" fill="#999"/>
<line x1="1493.0" x2="1503.5" y1="432.5" y2="432.5" stroke="#2a7bc4" stroke-width="1.8"/>
<text transform="translate(1509.5,437.4) scale(0.9,1)" class="lg">Branch - A…</text>
<line x1="1601.3" x2="1611.8" y1="432.5" y2="432.5" stroke="#fd8a2e" stroke-width="1.8"/>
<text transform="translate(1618.5,437.4) scale(0.9,1)" class="lg">Branch - C…</text>
<line x1="1710.0" x2="1720.5" y1="432.5" y2="432.5" stroke="#3aa83a" stroke-width="1.8"/>
<text transform="translate(1726.9,437.4) scale(0.9,1)" class="lg">Branch - L…</text>
<line x1="1818.8" x2="1829.3" y1="432.5" y2="432.5" stroke="#dc3a3f" stroke-width="1.8"/>
<text transform="translate(1835.0,437.4) scale(0.9,1)" class="lg">Branch - S…</text>
<line x1="61" x2="935" y1="882" y2="882" stroke="#e9e9e9" stroke-width="1"/>
<line x1="61" x2="935" y1="923.2" y2="923.2" stroke="#e9e9e9" stroke-width="1"/>
<line x1="61" x2="935" y1="964.5" y2="964.5" stroke="#e9e9e9" stroke-width="1"/>
<line x1="61" x2="935" y1="1005.7" y2="1005.7" stroke="#e3e3e3" stroke-width="1.6"/>
<line x1="61" x2="61" y1="1005.7" y2="1012.0" stroke="#e3e3e3" stroke-width="1.3"/>
<line x1="935" x2="935" y1="1005.7" y2="1012.0" stroke="#e3e3e3" stroke-width="1.3"/>
<line x1="87" x2="87" y1="1005.7" y2="1012.0" stroke="#e3e3e3" stroke-width="1.3"/>
<line x1="150.1" x2="150.1" y1="1005.7" y2="1012.0" stroke="#e3e3e3" stroke-width="1.3"/>
<line x1="213.3" x2="213.3" y1="1005.7" y2="1012.0" stroke="#e3e3e3" stroke-width="1.3"/>
<line x1="276.1" x2="276.1" y1="1005.7" y2="1012.0" stroke="#e3e3e3" stroke-width="1.3"/>
<line x1="339" x2="339" y1="1005.7" y2="1012.0" stroke="#e3e3e3" stroke-width="1.3"/>
<line x1="402" x2="402" y1="1005.7" y2="1012.0" stroke="#e3e3e3" stroke-width="1.3"/>
<line x1="465.2" x2="465.2" y1="1005.7" y2="1012.0" stroke="#e3e3e3" stroke-width="1.3"/>
<line x1="528.3" x2="528.3" y1="1005.7" y2="1012.0" stroke="#e3e3e3" stroke-width="1.3"/>
<line x1="590.3" x2="590.3" y1="1005.7" y2="1012.0" stroke="#e3e3e3" stroke-width="1.3"/>
<line x1="653" x2="653" y1="1005.7" y2="1012.0" stroke="#e3e3e3" stroke-width="1.3"/>
<line x1="715.6" x2="715.6" y1="1005.7" y2="1012.0" stroke="#e3e3e3" stroke-width="1.3"/>
<line x1="778.6" x2="778.6" y1="1005.7" y2="1012.0" stroke="#e3e3e3" stroke-width="1.3"/>
<line x1="841" x2="841" y1="1005.7" y2="1012.0" stroke="#e3e3e3" stroke-width="1.3"/>
<line x1="903.9" x2="903.9" y1="1005.7" y2="1012.0" stroke="#e3e3e3" stroke-width="1.3"/>
<text x="87" y="1023.1" text-anchor="middle" class="ax">12:00</text>
<text x="150.1" y="1023.1" text-anchor="middle" class="ax">28</text>
<text x="213.3" y="1023.1" text-anchor="middle" class="ax">12:00</text>
<text x="276.1" y="1023.1" text-anchor="middle" class="ax">29</text>
<text x="339" y="1023.1" text-anchor="middle" class="ax">12:00</text>
<text x="402" y="1023.1" text-anchor="middle" class="ax">30</text>
<text x="465.2" y="1023.1" text-anchor="middle" class="ax">12:00</text>
<text x="528.3" y="1023.1" text-anchor="middle" class="ax">October</text>
<text x="590.3" y="1023.1" text-anchor="middle" class="ax">12:00</text>
<text x="653" y="1023.1" text-anchor="middle" class="ax">2</text>
<text x="715.6" y="1023.1" text-anchor="middle" class="ax">12:00</text>
<text x="778.6" y="1023.1" text-anchor="middle" class="ax">3</text>
<text x="841" y="1023.1" text-anchor="middle" class="ax">12:00</text>
<text x="903.9" y="1023.1" text-anchor="middle" class="ax">4</text>
<text x="58.4" y="885.0" text-anchor="end" class="ax">150</text>
<text x="58.4" y="926.2" text-anchor="end" class="ax">100</text>
<text x="58.4" y="967.5" text-anchor="end" class="ax">50</text>
<text x="58.4" y="1008.7" text-anchor="end" class="ax">0</text>
<text x="43.6" y="837.5" class="ms">ms</text>
<polyline fill="none" stroke="#1f77b4" stroke-opacity="0.7" stroke-width="1.7" stroke-linejoin="round" points="60.8,939.0 66.1,939.0 71.3,938.8 76.6,938.6 81.8,939.1 87.1,938.7 92.3,938.8 97.6,938.9 102.9,939.1 108.1,939.4 113.4,939.0 118.6,939.4 123.9,939.4 129.2,938.8 134.4,938.6 139.7,938.7 144.9,939.3 150.2,939.1 155.4,939.4 160.7,939.4 166.0,939.1 171.2,939.0 176.5,938.6 181.7,938.6 187.0,939.0 192.0,941.5 197.0,939.0 202.3,939.3 207.7,939.2 213.0,939.2 218.3,939.1 223.7,939.2 229.0,939.1 234.4,939.4 239.7,939.0 244.7,942.5 249.7,939.0 255.1,938.7 260.6,939.0 266.0,939.0 271.2,936.5 276.0,938.5 281.0,936.5 286.0,939.0 291.3,938.8 296.6,939.3 301.9,939.3 307.1,938.8 312.4,938.6 317.7,938.8 323.0,939.0 328.0,942.5 333.0,939.0 338.3,938.8 343.5,939.2 348.8,938.9 354.1,939.2 359.4,938.8 364.6,939.0 369.9,938.7 375.2,939.1 380.5,939.0 385.7,939.3 391.0,939.0 396.0,941.5 401.0,939.0 406.2,939.3 411.5,938.9 416.8,938.4 422.0,939.1 427.2,939.0 432.5,938.5 437.8,938.5 443.0,938.8 448.2,938.1 453.5,938.0 458.8,938.4 464.0,938.3 469.2,938.2 474.5,938.2 479.8,937.9 485.0,937.7 490.2,937.5 495.5,937.4 500.8,937.5 506.0,937.5 511.0,939.0 516.3,938.4 521.7,938.2 527.0,937.5 532.0,939.0 537.0,937.5 542.0,939.0 547.5,939.0 553.0,938.8 558.5,938.6 564.0,938.8 569.5,938.5 575.0,938.5 580.0,937.5 586.0,939.0 591.0,939.3 596.1,939.1 601.2,939.2 606.2,939.0 611.2,941.5 616.0,939.0 621.5,942.0 626.5,939.0 631.7,938.9 637.0,939.0 642.2,939.2 647.4,939.4 652.7,939.0 657.9,938.8 663.1,939.2 668.4,938.7 673.6,938.9 678.8,938.6 684.1,939.0 689.3,938.8 694.5,938.9 699.8,939.3 705.0,939.1 710.2,938.6 715.5,938.9 720.7,938.6 725.9,939.3 731.2,939.0 736.4,939.3 741.6,938.8 746.9,939.3 752.1,938.7 757.3,939.3 762.6,938.9 767.8,938.6 773.0,939.4 778.3,939.3 783.5,938.7 788.8,939.1 794.0,939.0 799.2,938.7 804.5,938.9 809.7,939.4 814.9,938.9 820.2,939.2 825.4,939.2 830.6,939.2 835.9,939.1 841.1,939.4 846.3,938.9 851.6,939.0 856.8,939.0 862.0,938.6 867.3,939.0 872.5,939.2 877.7,939.1 883.0,938.7 888.2,938.8 893.4,939.0 898.7,938.6 903.9,938.7 909.1,939.2 914.4,938.6 919.6,938.7 924.8,938.7 930.1,939.0 935.3,939.0"/>
<polyline fill="none" stroke="#ff7f0e" stroke-opacity="0.7" stroke-width="1.7" stroke-linejoin="round" points="60.8,965.3 66.0,964.9 71.2,964.9 76.4,965.2 81.6,965.5 86.8,965.0 92.0,964.9 97.2,965.1 102.3,965.5 107.5,965.0 112.7,965.5 117.9,965.4 123.1,965.0 128.3,965.3 133.5,965.2 138.7,965.2 143.9,965.7 149.1,964.9 154.3,964.9 159.5,965.7 164.7,965.2 169.9,965.0 175.1,965.1 180.3,965.2 185.4,965.7 190.6,965.0 195.8,965.0 201.0,965.4 206.2,965.3 211.4,965.7 216.6,965.6 221.8,965.1 227.0,965.0 232.2,965.6 237.4,965.7 242.6,964.8 247.8,965.5 253.0,965.6 258.2,965.4 263.4,965.0 268.5,965.5 273.7,965.5 278.9,965.0 284.1,965.4 289.3,965.0 294.5,964.9 299.7,965.1 304.9,965.1 310.1,965.2 315.3,965.4 320.5,965.6 325.7,965.7 330.9,965.7 336.1,965.7 341.3,965.5 346.4,965.1 351.6,965.0 356.8,965.4 362.0,965.3 367.2,965.4 372.4,964.9 377.6,965.0 382.8,965.6 388.0,965.3 393.2,965.4 398.4,964.9 403.6,965.2 408.8,965.6 414.0,965.4 419.2,965.7 424.4,965.0 429.5,965.2 434.7,965.5 439.9,965.2 445.1,965.5 450.3,965.3 455.5,964.9 460.7,964.9 465.9,965.7 471.1,964.9 476.3,965.0 481.5,965.1 486.7,965.4 491.9,965.6 497.1,965.2 502.3,965.2 507.4,965.5 512.6,965.0 517.8,965.1 523.0,965.3 528.2,965.4 533.4,964.8 538.6,964.9 543.8,964.9 549.0,965.4 554.2,965.4 559.4,965.6 564.6,965.5 569.8,965.0 575.0,965.5 580.2,965.7 585.4,965.1 590.5,964.8 595.7,965.1 600.9,965.0 606.1,964.9 611.3,964.8 616.5,964.9 621.7,965.5 626.9,964.8 632.1,965.3 637.3,964.9 642.5,964.9 647.7,965.5 652.9,965.0 658.1,964.9 663.3,965.2 668.5,965.4 673.6,965.2 678.8,965.5 684.0,965.1 689.2,965.2 694.4,965.4 699.6,965.2 704.8,965.4 710.0,965.2 715.5,962.0 721.0,965.2 726.3,965.2 731.5,964.9 736.8,964.9 742.1,965.5 747.3,965.4 752.6,965.6 757.9,965.4 763.1,965.3 768.4,964.9 773.7,965.5 778.9,964.9 784.2,965.1 789.5,964.9 794.7,965.1 800.0,965.2 806.6,963.0 812.0,965.2 817.0,965.0 822.0,965.1 827.0,965.4 832.0,965.2 837.0,965.0 842.0,965.5 847.0,965.4 852.0,965.5 857.0,964.8 862.0,965.3 867.0,965.2 872.2,964.0 877.0,965.2 882.3,965.6 887.6,965.0 892.9,964.9 898.2,965.5 903.5,965.1 908.8,965.1 914.1,965.5 919.4,965.1 924.7,964.9 930.0,964.9 935.3,965.2"/>
<polyline fill="none" stroke="#2ca02c" stroke-opacity="0.7" stroke-width="1.7" stroke-linejoin="round" points="60.8,879.4 67.0,857.6 72.5,877.4 77.4,879.5 82.5,879.1 87.6,879.3 92.7,879.4 97.8,879.9 102.9,879.6 108.1,879.8 113.2,879.2 118.3,879.6 123.4,879.9 128.5,879.6 133.6,880.0 138.7,880.0 143.8,879.5 148.9,879.2 154.0,879.9 159.1,879.4 164.2,879.3 169.3,879.9 174.5,880.0 179.6,880.1 184.7,880.2 189.8,879.5 194.9,879.4 200.0,879.8 205.2,879.5 210.4,880.2 215.6,879.4 220.8,879.5 225.9,879.3 231.1,879.4 236.3,879.3 241.5,879.6 246.7,879.4 251.9,879.6 257.1,880.1 262.3,879.4 267.4,880.0 272.6,879.9 277.8,879.8 283.0,879.8 288.2,879.9 293.4,879.8 298.6,879.4 303.8,879.5 309.0,879.4 314.1,879.6 319.3,880.1 324.5,879.6 329.7,879.3 334.9,879.6 340.1,879.9 345.3,879.6 350.5,879.8 355.7,879.3 360.8,879.2 366.0,879.8 371.2,879.2 376.4,879.4 381.6,879.5 386.8,879.3 392.0,879.2 397.2,879.1 402.4,880.0 407.5,879.7 412.7,880.0 417.9,879.6 423.1,880.0 428.3,879.9 433.5,879.6 438.7,879.6 443.9,879.5 449.0,879.3 454.2,879.4 459.4,879.7 464.6,879.2 469.8,879.5 474.8,846.0 480.2,880.5 486.0,880.3 491.9,879.5 497.7,879.1 503.5,878.5 508.4,879.0 513.4,879.1 518.3,878.9 523.3,879.3 528.2,879.3 533.2,879.6 538.1,880.7 543.1,880.6 548.0,880.8 552.9,880.9 557.8,880.4 562.6,879.6 567.5,879.8 572.4,879.4 577.2,878.7 582.1,878.0 587.0,878.0 592.6,876.0 598.0,877.0 602.1,879.0 606.2,881.0 611.2,880.4 616.1,879.9 621.1,879.7 626.0,879.0 631.0,879.0 638.3,881.0 643.5,881.2 648.7,881.4 653.9,880.7 659.1,881.3 664.3,881.1 669.5,881.0 674.7,881.4 679.9,880.9 685.1,881.3 690.3,880.6 695.5,881.4 700.7,880.7 705.9,880.6 711.1,881.3 716.3,881.2 721.5,881.2 726.7,881.2 731.9,880.9 737.1,880.7 742.4,880.8 747.6,881.4 752.8,881.4 758.0,880.8 763.2,880.9 768.4,881.0 773.6,881.4 778.8,880.6 784.0,881.3 789.2,880.8 794.4,881.0 799.6,880.7 804.8,880.6 810.0,881.3 815.2,881.0 820.4,881.4 825.6,881.3 830.8,881.2 836.0,880.6 841.2,881.0 846.2,854.8 851.6,881.0 857.3,881.0 862.3,866.7 868.0,881.0 873.1,881.1 878.2,881.4 883.4,881.0 888.5,880.6 893.6,880.7 898.7,881.4 903.8,881.4 909.0,880.8 914.1,880.8 919.2,881.0 925.4,884.8 930.3,885.3 935.3,885.5"/>
<polyline fill="none" stroke="#d62728" stroke-opacity="0.7" stroke-width="1.7" stroke-linejoin="round" points="60.8,989.3 66.1,989.4 71.3,989.4 76.6,989.6 81.9,989.1 87.2,989.4 92.4,989.7 97.7,989.7 103.0,989.0 108.3,989.4 113.5,989.4 118.8,989.3 124.1,989.7 129.4,989.3 134.6,989.3 139.9,989.7 145.2,989.4 150.4,989.1 155.7,989.1 161.0,989.3 166.3,988.9 171.5,989.4 176.8,989.5 182.1,989.2 187.4,989.6 192.6,989.7 197.9,989.4 203.2,989.5 208.5,989.0 213.7,988.9 219.0,989.3 224.0,987.0 229.0,989.3 234.2,989.7 239.4,989.1 244.7,989.0 249.9,989.7 255.1,989.5 260.4,989.0 265.6,989.1 270.8,989.1 276.0,989.1 281.2,988.9 286.5,989.3 291.7,989.3 296.7,987.0 301.7,989.3 307.0,989.1 312.3,989.2 317.5,989.0 322.8,988.9 328.1,988.9 333.4,989.6 338.7,989.5 343.9,989.4 349.2,989.0 354.5,989.3 359.5,987.0 364.5,989.3 369.7,989.0 375.0,988.9 380.2,989.1 385.4,988.9 390.7,989.1 395.9,989.0 401.2,989.0 406.4,989.4 411.6,989.2 416.9,989.2 422.1,989.1 427.3,989.2 432.6,989.4 437.8,989.0 443.1,988.8 448.3,989.1 453.5,989.0 458.8,989.4 464.0,988.8 469.2,989.5 474.5,988.7 479.7,989.1 484.9,989.0 490.2,988.9 495.4,989.4 500.7,989.3 505.9,988.8 511.1,989.0 516.4,989.1 521.6,988.6 526.8,988.7 532.1,989.1 537.3,989.2 542.6,989.0 547.8,988.9 553.0,989.0 558.3,988.8 563.5,989.3 568.7,989.4 574.0,988.9 579.2,988.5 584.4,988.8 589.7,989.2 594.9,988.8 600.2,988.6 605.4,988.6 610.6,989.1 615.9,989.0 621.1,988.7 626.3,989.0 631.6,989.1 636.8,989.3 642.1,989.1 647.3,988.8 652.5,989.1 657.8,989.2 663.0,988.8 668.0,987.0 673.0,988.8 678.1,989.1 683.3,989.0 688.4,988.9 693.6,988.8 698.7,989.1 703.8,988.9 709.0,989.0 714.1,988.6 719.2,988.4 724.4,988.6 729.5,988.9 734.7,988.9 739.8,988.5 744.9,988.5 750.1,989.2 755.2,988.4 760.4,989.2 765.5,989.0 770.6,988.9 775.8,989.2 780.9,989.0 786.1,988.4 791.2,989.2 796.3,988.7 801.5,989.2 806.6,989.1 811.8,988.5 816.9,988.4 822.0,988.4 827.2,989.1 832.3,989.1 837.4,988.6 842.6,988.5 847.7,988.7 852.9,989.1 858.0,988.8 862.3,982.6 867.0,982.6 872.2,988.8 877.5,989.0 882.7,989.1 888.0,989.2 893.2,989.0 898.5,989.1 903.8,988.4 909.0,988.4 914.3,989.1 919.5,988.9 924.8,988.6 930.0,988.5 935.3,988.8"/>

<line x1="517.5" x2="528" y1="814.5" y2="814.5" stroke="#2a7bc4" stroke-width="1.8"/>
<text transform="translate(534,819.4) scale(0.9,1)" class="lg">Branch - A…</text>
<line x1="625.8" x2="636.3" y1="814.5" y2="814.5" stroke="#fd8a2e" stroke-width="1.8"/>
<text transform="translate(643,819.4) scale(0.9,1)" class="lg">Branch - C…</text>
<line x1="734.5" x2="745" y1="814.5" y2="814.5" stroke="#3aa83a" stroke-width="1.8"/>
<text transform="translate(751.4,819.4) scale(0.9,1)" class="lg">Branch - L…</text>
<line x1="843.3" x2="853.8" y1="814.5" y2="814.5" stroke="#dc3a3f" stroke-width="1.8"/>
<text transform="translate(859.5,819.4) scale(0.9,1)" class="lg">Branch - S…</text>
<line x1="1036.5" x2="1910.5" y1="851" y2="851" stroke="#e9e9e9" stroke-width="1"/>
<line x1="1036.5" x2="1910.5" y1="902.2" y2="902.2" stroke="#e9e9e9" stroke-width="1"/>
<line x1="1036.5" x2="1910.5" y1="953.4" y2="953.4" stroke="#e9e9e9" stroke-width="1"/>
<line x1="1036.5" x2="1910.5" y1="1005.2" y2="1005.2" stroke="#e3e3e3" stroke-width="1.6"/>
<line x1="1036.5" x2="1036.5" y1="1005.2" y2="1011.5" stroke="#e3e3e3" stroke-width="1.3"/>
<line x1="1910.5" x2="1910.5" y1="1005.2" y2="1011.5" stroke="#e3e3e3" stroke-width="1.3"/>
<line x1="1061.5" x2="1061.5" y1="1005.2" y2="1011.5" stroke="#e3e3e3" stroke-width="1.3"/>
<line x1="1124.6" x2="1124.6" y1="1005.2" y2="1011.5" stroke="#e3e3e3" stroke-width="1.3"/>
<line x1="1187.8" x2="1187.8" y1="1005.2" y2="1011.5" stroke="#e3e3e3" stroke-width="1.3"/>
<line x1="1250.6" x2="1250.6" y1="1005.2" y2="1011.5" stroke="#e3e3e3" stroke-width="1.3"/>
<line x1="1313.5" x2="1313.5" y1="1005.2" y2="1011.5" stroke="#e3e3e3" stroke-width="1.3"/>
<line x1="1376.5" x2="1376.5" y1="1005.2" y2="1011.5" stroke="#e3e3e3" stroke-width="1.3"/>
<line x1="1439.7" x2="1439.7" y1="1005.2" y2="1011.5" stroke="#e3e3e3" stroke-width="1.3"/>
<line x1="1502.8" x2="1502.8" y1="1005.2" y2="1011.5" stroke="#e3e3e3" stroke-width="1.3"/>
<line x1="1564.8" x2="1564.8" y1="1005.2" y2="1011.5" stroke="#e3e3e3" stroke-width="1.3"/>
<line x1="1627.5" x2="1627.5" y1="1005.2" y2="1011.5" stroke="#e3e3e3" stroke-width="1.3"/>
<line x1="1690.1" x2="1690.1" y1="1005.2" y2="1011.5" stroke="#e3e3e3" stroke-width="1.3"/>
<line x1="1753.1" x2="1753.1" y1="1005.2" y2="1011.5" stroke="#e3e3e3" stroke-width="1.3"/>
<line x1="1815.5" x2="1815.5" y1="1005.2" y2="1011.5" stroke="#e3e3e3" stroke-width="1.3"/>
<line x1="1878.4" x2="1878.4" y1="1005.2" y2="1011.5" stroke="#e3e3e3" stroke-width="1.3"/>
<text x="1061.5" y="1022.6" text-anchor="middle" class="ax">12:00</text>
<text x="1124.6" y="1022.6" text-anchor="middle" class="ax">28</text>
<text x="1187.8" y="1022.6" text-anchor="middle" class="ax">12:00</text>
<text x="1250.6" y="1022.6" text-anchor="middle" class="ax">29</text>
<text x="1313.5" y="1022.6" text-anchor="middle" class="ax">12:00</text>
<text x="1376.5" y="1022.6" text-anchor="middle" class="ax">30</text>
<text x="1439.7" y="1022.6" text-anchor="middle" class="ax">12:00</text>
<text x="1502.8" y="1022.6" text-anchor="middle" class="ax">October</text>
<text x="1564.8" y="1022.6" text-anchor="middle" class="ax">12:00</text>
<text x="1627.5" y="1022.6" text-anchor="middle" class="ax">2</text>
<text x="1690.1" y="1022.6" text-anchor="middle" class="ax">12:00</text>
<text x="1753.1" y="1022.6" text-anchor="middle" class="ax">3</text>
<text x="1815.5" y="1022.6" text-anchor="middle" class="ax">12:00</text>
<text x="1878.4" y="1022.6" text-anchor="middle" class="ax">4</text>
<text x="1033.9" y="854.0" text-anchor="end" class="ax">300</text>
<text x="1033.9" y="905.2" text-anchor="end" class="ax">200</text>
<text x="1033.9" y="956.4" text-anchor="end" class="ax">100</text>
<text x="1033.9" y="1008.2" text-anchor="end" class="ax">0</text>
<text x="1019.1" y="837.5" class="ms">ms</text>
<polyline fill="none" stroke="#1f77b4" stroke-opacity="0.7" stroke-width="1.7" stroke-linejoin="round" points="1036.5,968.0 1041.7,968.0 1046.5,963.3 1051.6,963.0 1056.7,963.1 1061.8,962.5 1067.2,968.0 1072.2,963.3 1078.0,962.9 1083.8,963.3 1088.8,967.0 1093.8,964.2 1098.8,961.5 1104.6,963.0 1109.6,962.5 1115.0,968.0 1120.0,963.3 1125.3,963.1 1130.5,963.7 1135.8,963.4 1141.0,963.0 1146.3,963.2 1151.6,963.6 1156.8,963.2 1162.1,963.3 1167.3,968.0 1172.5,968.0 1177.2,963.3 1182.5,962.9 1187.8,963.7 1193.1,963.0 1198.4,963.3 1203.6,968.0 1208.8,963.3 1214.0,963.4 1219.3,963.4 1224.5,963.3 1229.7,963.8 1235.0,963.1 1240.2,963.4 1245.5,963.0 1250.7,963.8 1255.9,963.1 1261.2,963.4 1266.4,963.7 1271.6,963.8 1276.9,963.1 1282.1,963.8 1287.3,963.7 1292.6,963.3 1297.8,963.7 1303.1,963.2 1308.3,963.2 1313.5,963.2 1318.8,963.3 1324.0,963.5 1329.2,968.1 1334.5,963.5 1339.5,963.8 1344.5,963.5 1349.5,963.9 1354.5,963.9 1359.5,963.2 1364.5,963.4 1369.5,963.1 1374.5,963.6 1379.5,963.6 1384.5,963.5 1389.7,967.0 1396.7,963.5 1402.8,967.0 1407.2,963.5 1412.6,963.6 1418.1,963.1 1423.5,963.6 1429.0,963.2 1434.4,963.5 1439.1,968.1 1444.9,963.5 1449.7,963.8 1454.5,963.5 1459.8,949.5 1465.4,963.5 1470.7,963.5 1475.9,963.5 1481.2,968.1 1486.1,963.0 1491.3,962.7 1496.6,963.5 1501.8,963.5 1507.1,963.0 1512.3,963.5 1517.6,963.0 1522.8,963.2 1528.0,963.3 1533.3,963.5 1538.5,962.9 1543.8,962.9 1549.0,963.1 1554.3,963.3 1559.5,963.7 1564.8,963.7 1570.0,963.5 1575.5,961.5 1581.0,963.9 1586.2,963.5 1591.5,964.1 1596.8,963.6 1602.0,963.9 1607.1,967.4 1612.0,963.9 1617.2,963.5 1622.4,963.9 1627.7,964.3 1632.9,964.3 1638.1,963.8 1643.3,964.2 1648.5,963.6 1653.7,963.6 1659.0,964.3 1664.2,964.1 1669.4,963.9 1674.4,967.4 1679.4,963.9 1684.7,963.6 1690.1,963.8 1695.4,964.1 1700.7,963.5 1706.1,963.6 1711.4,963.9 1716.4,967.4 1721.4,963.9 1726.7,964.2 1732.0,963.7 1737.2,963.8 1742.5,963.8 1747.8,963.9 1753.1,963.9 1758.1,967.4 1763.1,963.9 1768.4,963.7 1773.8,963.7 1779.1,964.2 1784.4,964.1 1789.7,964.3 1795.0,963.5 1800.4,963.6 1805.7,964.2 1811.0,963.7 1816.3,964.2 1821.7,963.7 1827.0,963.9 1832.4,961.7 1837.1,964.1 1841.9,966.4 1846.6,968.8 1853.7,964.0 1858.0,964.0 1863.1,968.0 1868.3,964.0 1873.5,963.9 1878.7,964.2 1883.8,963.9 1889.0,964.0 1894.2,967.4 1899.7,964.0 1905.3,964.0 1911.0,964.0"/>
<polyline fill="none" stroke="#ff7f0e" stroke-opacity="0.7" stroke-width="1.7" stroke-linejoin="round" points="1036.5,979.8 1041.7,979.7 1046.9,979.6 1052.1,979.5 1057.3,980.2 1062.4,979.9 1067.6,980.0 1072.8,979.8 1078.0,979.7 1083.2,979.8 1088.4,953.9 1093.6,979.8 1098.8,966.3 1104.0,979.8 1109.2,979.8 1115.0,973.6 1120.0,979.8 1125.3,951.8 1130.3,979.8 1135.3,980.0 1140.3,979.8 1146.1,972.1 1151.7,975.0 1156.3,977.4 1161.0,979.8 1166.3,979.9 1171.7,980.1 1177.0,979.8 1182.8,977.0 1188.0,979.8 1193.2,979.9 1198.4,980.1 1203.6,979.7 1208.8,979.5 1214.0,979.8 1219.2,970.5 1224.3,979.8 1230.2,967.8 1235.4,979.8 1240.2,979.5 1245.1,979.8 1250.7,970.5 1256.1,979.8 1261.1,980.3 1266.1,980.4 1271.9,936.0 1276.6,968.4 1281.9,980.4 1287.2,980.1 1292.4,980.5 1297.7,980.4 1302.9,961.4 1307.7,961.4 1313.5,957.6 1319.2,980.0 1324.0,970.2 1329.2,980.4 1334.5,980.5 1339.7,980.0 1345.0,980.4 1350.3,965.0 1355.5,962.3 1360.8,980.0 1366.0,970.2 1371.3,963.2 1375.7,949.5 1380.9,974.0 1386.2,980.4 1391.4,966.7 1397.0,980.4 1402.3,961.1 1408.1,980.4 1412.8,965.8 1418.0,972.9 1423.3,980.0 1428.6,971.6 1434.4,980.4 1439.2,978.8 1444.0,977.2 1449.6,945.7 1454.5,972.0 1460.1,980.4 1465.4,971.1 1470.7,967.6 1475.9,968.4 1481.2,946.5 1486.1,960.6 1491.7,955.8 1496.6,943.9 1501.9,980.4 1507.2,980.7 1512.4,980.0 1517.7,980.7 1522.9,980.7 1528.2,980.1 1533.4,980.6 1538.7,980.6 1543.9,980.1 1549.2,980.4 1554.4,971.6 1559.7,980.0 1565.0,977.0 1570.2,977.0 1575.5,944.8 1580.4,977.0 1584.5,977.4 1588.6,977.5 1594.3,977.9 1600.0,979.0 1605.5,979.7 1611.1,979.8 1616.6,979.9 1622.9,969.3 1627.2,981.0 1632.4,961.7 1637.8,965.7 1643.2,957.5 1648.4,960.3 1653.6,945.7 1659.0,950.9 1664.5,952.3 1669.6,945.7 1674.8,943.3 1680.3,945.7 1687.3,950.4 1691.4,955.7 1695.6,961.0 1700.8,957.0 1706.2,960.3 1713.3,964.6 1718.0,961.7 1722.7,958.7 1727.5,961.4 1732.2,964.1 1737.6,958.7 1745.1,961.7 1749.2,961.2 1753.4,959.9 1757.5,958.9 1761.6,958.7 1768.7,955.1 1773.9,962.2 1779.3,958.0 1784.0,955.1 1788.8,952.3 1794.7,957.5 1800.6,940.5 1806.0,950.9 1811.0,952.8 1815.9,954.7 1821.2,952.8 1826.5,950.9 1831.2,954.0 1836.0,958.0 1841.9,953.2 1847.8,956.3 1853.7,954.7 1857.9,956.3 1863.1,951.6 1868.3,959.4 1873.7,958.9 1879.1,958.7 1884.3,961.7 1889.2,957.2 1894.2,952.8 1899.7,963.4 1905.1,954.7 1911.0,961.7"/>
<polyline fill="none" stroke="#2ca02c" stroke-opacity="0.7" stroke-width="1.7" stroke-linejoin="round" points="1036.5,929.6 1041.1,919.2 1046.5,930.0 1051.6,930.2 1056.6,929.8 1061.7,930.1 1066.7,930.2 1071.8,930.5 1078.0,920.7 1083.8,930.3 1089.0,930.5 1094.3,930.4 1099.5,930.6 1104.8,929.8 1110.0,930.1 1115.3,929.7 1120.5,929.8 1125.8,930.0 1131.0,930.0 1136.1,931.5 1141.0,930.0 1146.2,929.6 1151.5,929.7 1156.7,930.1 1161.9,930.0 1167.1,929.7 1172.4,930.1 1177.6,930.3 1182.8,929.5 1188.1,930.2 1193.3,930.1 1198.5,929.8 1203.7,929.7 1209.0,930.4 1214.2,929.8 1219.4,929.6 1224.7,929.6 1229.9,930.3 1235.1,930.0 1240.3,930.2 1245.6,930.1 1250.8,930.0 1256.0,930.4 1261.3,929.8 1266.5,930.0 1271.7,930.2 1276.9,930.0 1282.2,930.2 1287.4,930.0 1292.6,930.1 1297.9,929.5 1303.1,929.7 1308.3,929.7 1313.5,929.5 1318.8,929.7 1324.0,929.9 1329.2,917.6 1335.0,929.9 1340.1,929.5 1345.3,929.7 1350.4,930.0 1355.5,929.8 1360.7,929.8 1365.8,929.6 1370.9,929.7 1376.1,930.3 1381.2,930.0 1386.3,930.0 1391.5,929.6 1396.6,930.1 1401.7,929.6 1406.9,929.8 1412.0,929.9 1417.7,928.0 1423.0,929.9 1428.3,930.4 1433.5,930.1 1438.8,930.1 1444.0,930.2 1449.3,930.4 1454.6,930.4 1459.8,929.9 1465.1,929.8 1470.3,930.1 1475.6,930.1 1480.8,930.1 1486.1,930.8 1491.4,930.8 1496.6,930.3 1501.9,930.7 1507.1,930.5 1512.4,931.0 1517.7,930.6 1522.9,930.5 1528.2,930.5 1533.4,930.8 1538.7,930.8 1543.6,917.3 1548.8,930.5 1554.4,921.1 1559.7,931.0 1565.0,923.2 1570.2,930.0 1575.3,930.3 1580.4,931.0 1585.6,912.4 1590.6,929.7 1595.6,930.1 1600.7,930.7 1605.7,930.6 1610.7,931.0 1617.7,929.0 1622.8,929.2 1627.9,930.3 1633.1,930.3 1638.2,930.3 1643.3,930.7 1648.4,931.5 1653.7,931.1 1659.0,931.5 1664.3,931.6 1669.6,931.3 1674.9,930.9 1680.2,931.1 1685.6,931.7 1690.9,931.2 1696.2,931.5 1701.5,931.4 1706.8,930.6 1712.1,931.0 1717.4,931.5 1722.7,931.8 1728.0,932.0 1733.3,932.3 1738.5,932.1 1743.6,932.5 1748.8,932.0 1754.0,932.3 1759.1,932.3 1764.3,932.8 1769.4,932.7 1774.6,932.2 1779.8,932.4 1784.9,932.1 1790.1,932.8 1795.2,932.8 1800.4,932.3 1805.6,932.6 1810.7,932.6 1815.9,932.5 1821.1,924.9 1826.5,932.3 1831.8,932.0 1837.1,932.5 1842.3,932.3 1847.6,932.5 1852.9,932.2 1858.2,931.7 1863.5,932.0 1868.8,931.7 1874.0,932.5 1879.3,932.5 1884.6,932.4 1889.9,931.9 1895.2,931.7 1900.4,932.4 1905.7,932.4 1911.0,932.0"/>
<polyline fill="none" stroke="#d62728" stroke-opacity="0.7" stroke-width="1.7" stroke-linejoin="round" points="1036.5,982.3 1041.8,981.9 1047.0,982.4 1052.3,981.9 1057.6,982.2 1062.9,982.3 1068.1,982.4 1073.4,982.1 1078.7,982.1 1084.0,981.7 1089.2,982.0 1094.5,981.9 1099.8,982.3 1105.1,982.0 1110.3,982.2 1115.6,981.9 1120.9,981.6 1126.2,982.2 1131.4,982.2 1136.7,981.8 1142.0,981.5 1147.3,981.8 1152.5,981.8 1157.8,982.0 1163.1,981.8 1168.4,981.7 1173.6,981.8 1178.9,981.6 1184.2,981.3 1189.5,981.3 1194.7,982.0 1200.0,981.6 1205.2,981.9 1210.4,981.4 1215.6,981.9 1220.9,981.6 1226.1,981.2 1231.3,981.9 1236.5,981.7 1241.7,982.0 1246.9,981.8 1252.2,981.2 1257.4,981.7 1262.6,981.9 1267.8,982.0 1273.0,981.4 1278.2,981.6 1283.5,981.8 1288.7,981.3 1293.9,981.9 1299.1,981.9 1304.3,981.2 1309.5,981.7 1314.7,981.5 1320.0,981.3 1325.2,981.7 1330.4,982.0 1335.6,981.6 1340.8,981.3 1346.0,981.6 1351.3,981.9 1356.5,982.0 1361.7,981.8 1366.9,981.2 1372.1,982.0 1377.3,981.7 1382.6,981.2 1387.8,981.3 1393.0,981.2 1398.2,981.7 1403.4,981.3 1408.6,981.9 1413.8,981.2 1419.1,981.6 1424.3,981.5 1429.5,981.2 1434.7,981.2 1439.9,982.0 1445.1,982.0 1450.4,981.3 1455.6,981.8 1460.8,982.0 1466.0,982.0 1471.2,981.9 1476.4,981.5 1481.7,981.8 1486.9,981.6 1492.1,982.0 1497.3,981.8 1502.5,981.9 1507.7,981.9 1513.0,981.5 1518.2,981.8 1523.4,981.2 1528.6,981.3 1533.8,982.0 1539.0,981.5 1544.2,981.8 1549.5,981.7 1554.7,981.4 1559.9,981.7 1565.1,982.0 1570.3,981.4 1575.5,981.5 1580.8,981.3 1586.0,981.3 1591.2,981.9 1596.4,981.8 1601.6,982.0 1606.8,981.8 1612.1,982.0 1617.3,981.3 1622.5,981.3 1627.7,981.6 1633.1,846.1 1638.5,972.8 1643.7,981.6 1648.9,981.3 1654.1,981.5 1659.3,982.0 1664.6,981.4 1669.8,981.6 1675.0,981.2 1680.2,981.2 1685.4,981.6 1690.6,981.7 1695.8,981.6 1701.1,982.0 1706.3,981.9 1711.5,982.0 1716.7,981.7 1721.9,981.4 1727.1,981.3 1732.4,981.8 1737.6,981.3 1742.8,981.2 1748.0,981.6 1753.4,962.2 1758.8,981.6 1764.1,981.8 1769.3,981.3 1774.6,981.7 1779.8,981.3 1785.1,981.5 1790.3,981.2 1795.6,981.5 1800.9,981.4 1806.1,981.4 1811.4,981.3 1816.6,981.7 1821.9,981.8 1827.1,981.3 1832.4,981.6 1836.0,977.5 1841.9,977.5 1846.6,981.0 1852.0,980.6 1857.3,980.9 1862.7,981.3 1868.1,981.0 1873.4,981.4 1878.8,980.9 1884.2,981.5 1889.5,981.1 1894.9,981.2 1900.3,981.7 1905.6,981.5 1911.0,981.6"/>

<line x1="1493.0" x2="1503.5" y1="814.5" y2="814.5" stroke="#2a7bc4" stroke-width="1.8"/>
<text transform="translate(1509.5,819.4) scale(0.9,1)" class="lg">Branch - A…</text>
<line x1="1601.3" x2="1611.8" y1="814.5" y2="814.5" stroke="#fd8a2e" stroke-width="1.8"/>
<text transform="translate(1618.5,819.4) scale(0.9,1)" class="lg">Branch - C…</text>
<line x1="1710.0" x2="1720.5" y1="814.5" y2="814.5" stroke="#3aa83a" stroke-width="1.8"/>
<text transform="translate(1726.9,819.4) scale(0.9,1)" class="lg">Branch - L…</text>
<line x1="1818.8" x2="1829.3" y1="814.5" y2="814.5" stroke="#dc3a3f" stroke-width="1.8"/>
<text transform="translate(1835.0,819.4) scale(0.9,1)" class="lg">Branch - S…</text></svg>
</body></html>
